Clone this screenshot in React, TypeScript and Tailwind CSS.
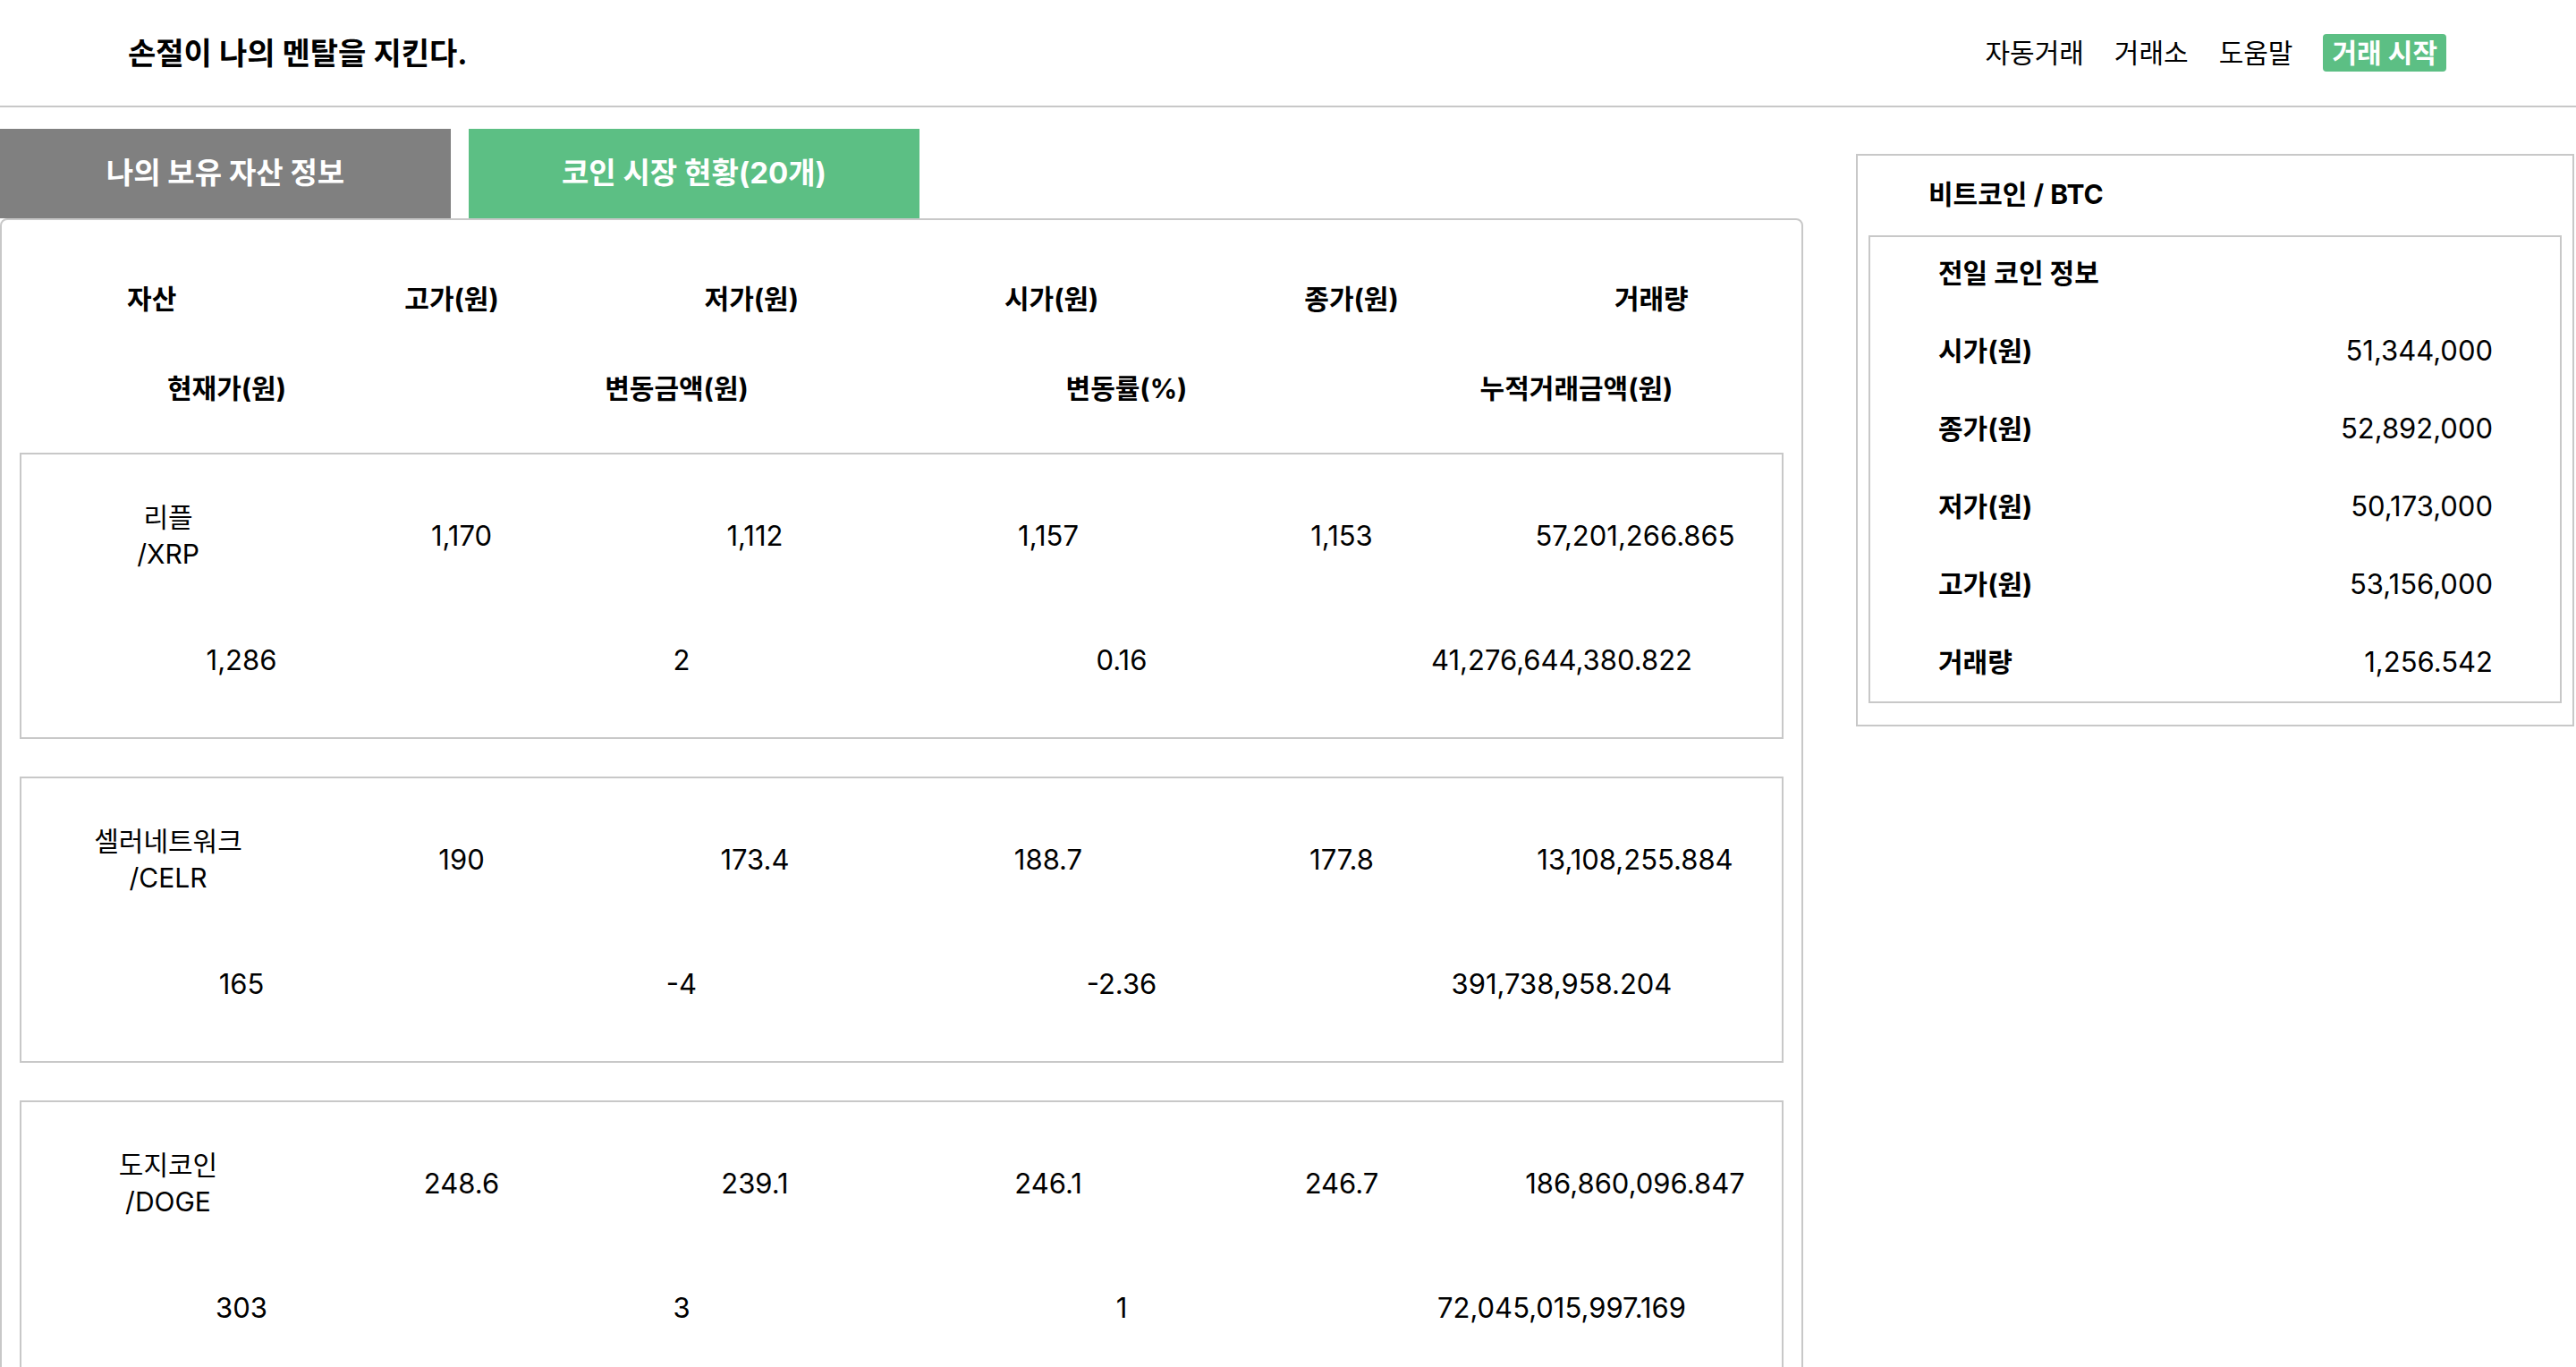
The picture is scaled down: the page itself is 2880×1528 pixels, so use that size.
const coins = [
  {
    name: "리플",
    symbol: "/XRP",
    high: "1,170",
    low: "1,112",
    open: "1,157",
    close: "1,153",
    volume: "57,201,266.865",
    price: "1,286",
    change: "2",
    rate: "0.16",
    total: "41,276,644,380.822",
  },
  {
    name: "셀러네트워크",
    symbol: "/CELR",
    high: "190",
    low: "173.4",
    open: "188.7",
    close: "177.8",
    volume: "13,108,255.884",
    price: "165",
    change: "-4",
    rate: "-2.36",
    total: "391,738,958.204",
  },
  {
    name: "도지코인",
    symbol: "/DOGE",
    high: "248.6",
    low: "239.1",
    open: "246.1",
    close: "246.7",
    volume: "186,860,096.847",
    price: "303",
    change: "3",
    rate: "1",
    total: "72,045,015,997.169",
  },
];

const topLabels = ["자산", "고가(원)", "저가(원)", "시가(원)", "종가(원)", "거래량"];
const bottomLabels = ["현재가(원)", "변동금액(원)", "변동률(%)", "누적거래금액(원)"];

const btcInfo = [
  { label: "시가(원)", value: "51,344,000" },
  { label: "종가(원)", value: "52,892,000" },
  { label: "저가(원)", value: "50,173,000" },
  { label: "고가(원)", value: "53,156,000" },
  { label: "거래량", value: "1,256.542" },
];

export default function App() {
  return (
    <div className="h-[1528px] overflow-hidden bg-white text-black font-['Inter','Noto_Sans_CJK_KR',sans-serif]">
      {/* 헤더 */}
      <header className="h-[120px] border-b-2 border-[#c8c8c8] flex items-center justify-between pl-[143px] pr-[145px]">
        <h1 className="text-[34px] font-bold">손절이 나의 멘탈을 지킨다.</h1>
        <nav className="flex items-center gap-[34px] text-[30px]">
          <a>자동거래</a>
          <a>거래소</a>
          <a>도움말</a>
          <button className="h-[42px] px-[10px] rounded-[4px] bg-[#5cbf84] text-white font-bold leading-none">
            거래 시작
          </button>
        </nav>
      </header>

      <div className="flex items-start pt-[24px]">
        {/* 코인 시장 */}
        <div className="w-[2016px] shrink-0">
          <div className="flex gap-[20px]">
            <button className="w-[504px] h-[100px] bg-[#808080] text-white text-[33px] font-bold">
              나의 보유 자산 정보
            </button>
            <button className="w-[504px] h-[100px] bg-[#5cbf84] text-white text-[33px] font-bold">
              코인 시장 현황(20개)
            </button>
          </div>

          <div className="border-2 border-[#c8c8c8] rounded-[8px] pt-[38px] px-[20px] pb-[40px]">
            <div className="-mx-[20px] grid grid-cols-6 h-[100px] items-center text-center text-[30px] font-bold">
              {topLabels.map((label) => (
                <div key={label}>{label}</div>
              ))}
            </div>
            <div className="-mx-[20px] grid grid-cols-4 h-[100px] items-center text-center text-[30px] font-bold">
              {bottomLabels.map((label) => (
                <div key={label}>{label}</div>
              ))}
            </div>

            <div className="mt-[22px] flex flex-col gap-[42px]">
              {coins.map((coin) => (
                <div key={coin.symbol} className="border-2 border-[#c8c8c8] pt-[33px] pb-[4px] text-[31px] text-center">
                  <div className="grid grid-cols-6 h-[116px] items-center">
                    <div className="leading-[41px] text-[30px]">
                      <div>{coin.name}</div>
                      <div>{coin.symbol}</div>
                    </div>
                    <div>{coin.high}</div>
                    <div>{coin.low}</div>
                    <div>{coin.open}</div>
                    <div>{coin.close}</div>
                    <div>{coin.volume}</div>
                  </div>
                  <div className="grid grid-cols-4 h-[163px] items-center">
                    <div>{coin.price}</div>
                    <div>{coin.change}</div>
                    <div>{coin.rate}</div>
                    <div>{coin.total}</div>
                  </div>
                </div>
              ))}
            </div>
          </div>
        </div>

        {/* 비트코인 정보 */}
        <aside className="ml-[59px] mt-[28px] w-[803px] shrink-0 border-2 border-[#c8c8c8] px-[12px] pt-[22px] pb-[24px]">
          <div className="pl-[67px] h-[42px] flex items-center text-[30px] font-bold">
            비트코인 / BTC
          </div>
          <div className="mt-[25px] border-2 border-[#c8c8c8] pt-[18px] pl-[76px] pr-[75px] text-[30px]">
            <div className="h-[44px] flex items-center font-bold">전일 코인 정보</div>
            <div className="mt-[22px]">
              {btcInfo.map((row) => (
                <div key={row.label} className="h-[87px] flex items-center justify-between">
                  <span className="font-bold">{row.label}</span>
                  <span className="text-[31px]">{row.value}</span>
                </div>
              ))}
            </div>
          </div>
        </aside>
      </div>
    </div>
  );
}
